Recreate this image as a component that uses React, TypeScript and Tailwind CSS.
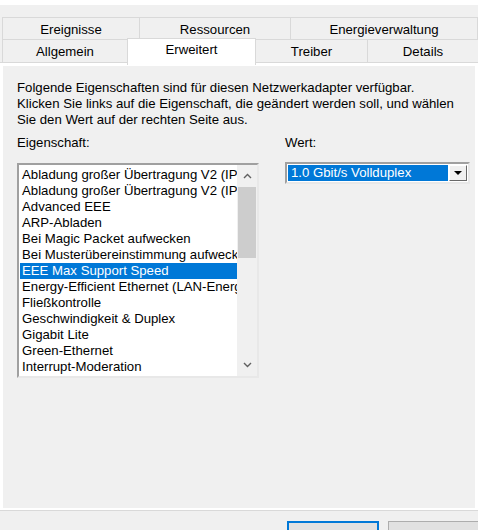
const topTabs = [
  { label: 'Ereignisse', w: 'w-[137px]' },
  { label: 'Ressourcen', w: 'w-[151px]' },
  { label: 'Energieverwaltung', w: 'w-[188px]' },
]

const properties = [
  'Abladung großer Übertragung V2 (IPv4)',
  'Abladung großer Übertragung V2 (IPv6)',
  'Advanced EEE',
  'ARP-Abladen',
  'Bei Magic Packet aufwecken',
  'Bei Musterübereinstimmung aufwecken',
  'EEE Max Support Speed',
  'Energy-Efficient Ethernet (LAN-Energiesparmodus)',
  'Fließkontrolle',
  'Geschwindigkeit & Duplex',
  'Gigabit Lite',
  'Green-Ethernet',
  'Interrupt-Moderation',
]

function Chevron({ down }: { down?: boolean }) {
  return (
    <svg width="9" height="6" viewBox="0 0 9 6" className="block">
      <polyline
        points={down ? '1,1 4.5,4.5 8,1' : '1,5 4.5,1.5 8,5'}
        fill="none"
        stroke="#606060"
        strokeWidth="1.4"
      />
    </svg>
  )
}

function PropertyList() {
  const selected = 'EEE Max Support Speed'
  return (
    <div className="flex h-[215px] w-[242px] border-2 border-t-[#a0a0a0] border-l-[#a0a0a0] border-r-[#e8e8e8] border-b-[#e8e8e8] bg-white">
      <div className="flex-1 overflow-hidden pt-[2px] pl-[1px]">
        {properties.map(p => (
          <div
            key={p}
            className={
              p === selected
                ? 'h-[16px] whitespace-nowrap bg-[#0078d7] pl-[2px] leading-[16px] text-white'
                : 'h-[16px] whitespace-nowrap pl-[2px] leading-[16px]'
            }
          >
            {p}
          </div>
        ))}
      </div>
      <div className="flex w-[20px] flex-col bg-[#f0f0f0]">
        <div className="flex h-[22px] items-center justify-center">
          <Chevron />
        </div>
        <div className="mx-[1px] h-[71px] bg-[#cdcdcd]" />
        <div className="flex-1" />
        <div className="flex h-[22px] items-center justify-center">
          <Chevron down />
        </div>
      </div>
    </div>
  )
}

function ValueSelect() {
  return (
    <div className="flex h-[22px] w-[185px] border-2 border-t-[#a0a0a0] border-l-[#a0a0a0] border-r-[#e8e8e8] border-b-[#e8e8e8] bg-white p-[1px]">
      <div className="flex-1 bg-[#0078d7] pl-[3px] leading-[16px] text-white">1.0 Gbit/s Vollduplex</div>
      <div className="ml-[1px] flex w-[18px] items-center justify-center border border-t-white border-l-white border-r-[#696969] border-b-[#696969] bg-[#f0f0f0]">
        <svg width="8" height="4" viewBox="0 0 8 4">
          <polygon points="0,0 8,0 4,4" fill="#000" />
        </svg>
      </div>
    </div>
  )
}

export default function App() {
  return (
    <div className="h-[530px] w-[478px] overflow-hidden bg-[#f0f0f0] font-['Liberation_Sans',Arial,sans-serif] text-[13.2px] text-black">
      <div className="h-[5px] bg-white" />
      <div className="h-[12px]" />

      <div className="flex h-[22px] pl-[2px]">
        {topTabs.map(t => (
          <div
            key={t.label}
            className={`${t.w} border-t border-l border-[#d9d9d9] pt-[4px] text-center leading-[16px] last:border-r`}
          >
            {t.label}
          </div>
        ))}
      </div>

      <div className="flex h-[23px] pl-[2px]">
        <div className="w-[125px] border-t border-l border-[#d9d9d9] pt-[4px] text-center leading-[16px]">Allgemein</div>
        <div className="relative z-10 -mt-[1px] h-[27px] w-[129px] border-t border-l border-r border-[#d9d9d9] bg-white pt-[3px] text-center leading-[16px]">
          Erweitert
        </div>
        <div className="w-[111px] border-t border-[#d9d9d9] pt-[4px] text-center leading-[16px]">Treiber</div>
        <div className="w-[111px] border-t border-l border-[#d9d9d9] pt-[4px] text-center leading-[16px]">Details</div>
      </div>

      <div className="border-t border-b border-[#d9d9d9] bg-white px-[3px] pt-[3px] pb-[2px]">
        <div className="h-[442px] bg-[#f0f0f0] px-[14px] pt-[14px]">
          <p className="leading-[16px]">
            Folgende Eigenschaften sind für diesen Netzwerkadapter verfügbar.
            <br />
            Klicken Sie links auf die Eigenschaft, die geändert werden soll, und wählen
            <br />
            Sie den Wert auf der rechten Seite aus.
          </p>

          <div className="mt-[7px] flex">
            <div className="w-[242px]">
              <div className="leading-[16px]">Eigenschaft:</div>
              <div className="mt-[12px]">
                <PropertyList />
              </div>
            </div>
            <div className="ml-[26px]">
              <div className="leading-[16px]">Wert:</div>
              <div className="mt-[11px]">
                <ValueSelect />
              </div>
            </div>
          </div>
        </div>
      </div>

      <div className="mt-[10px] flex justify-end gap-[9px]">
        <button className="h-[26px] w-[92px] border border-[#0078d7] bg-[#e1e1e1] pt-[4px] leading-[16px] outline outline-1 -outline-offset-2 outline-[#0078d7]">
          OK
        </button>
        <button className="-mr-[4px] h-[26px] w-[94px] border border-[#adadad] bg-[#e1e1e1] pt-[4px] leading-[16px]">
          Abbrechen
        </button>
      </div>
    </div>
  )
}
